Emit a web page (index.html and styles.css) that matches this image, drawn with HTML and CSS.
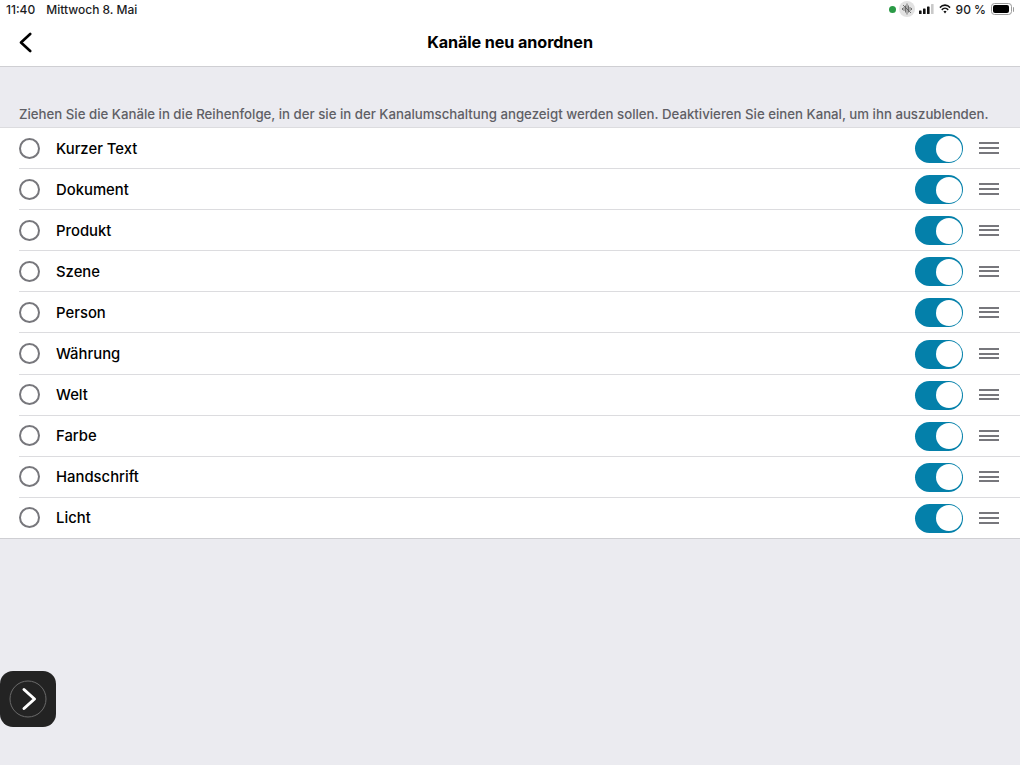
FILE: index.html
```html
<!DOCTYPE html>
<html lang="de">
<head>
<meta charset="utf-8">
<title>Kanäle neu anordnen</title>
<link rel="stylesheet" href="styles.css">
</head>
<body>
<header class="top">
  <div class="status">
    <div class="status-left"><span>11:40</span><span>Mittwoch 8. Mai</span></div>
    <div class="status-right">
      <span class="dot"></span>
      <span class="mic"><svg width="14" height="14" viewBox="0 0 14 14"><path d="M7 1.5v11M5.5 3.5v7M8.5 3.5v7M4 5v4M10 5v4M2.5 6v2M11.5 6v2M3 3l8 8" stroke="#555" stroke-width=".8" fill="none"/></svg></span>
      <svg class="signal" width="15" height="10" viewBox="0 0 15 10"><rect x="0" y="6.5" width="2.6" height="3.5" rx=".6" fill="#111"/><rect x="4" y="4.5" width="2.6" height="5.5" rx=".6" fill="#111"/><rect x="8" y="2.5" width="2.6" height="7.5" rx=".6" fill="#111"/><rect x="12" y="0" width="2.6" height="10" rx=".6" fill="#c9c9c9"/></svg>
      <svg class="wifi" width="12" height="10" viewBox="0 0 14 10" preserveAspectRatio="none"><path d="M1 3.6a8.6 8.6 0 0 1 12 0M3.2 5.8a5.5 5.5 0 0 1 7.6 0" stroke="#111" stroke-width="1.6" fill="none"/><path d="M5.2 7.5a2.6 2.6 0 0 1 3.6 0L7 9.6z" fill="#111"/></svg>
      <span class="pct">90 %</span>
      <span class="battery"><span class="battery-fill"></span></span>
    </div>
  </div>
  <nav class="nav">
    <svg class="back" width="14" height="22" viewBox="0 0 14 22"><path d="M12.2 2 3 10.5l9.2 8.5" stroke="#000" stroke-width="2.6" fill="none" stroke-linecap="round" stroke-linejoin="round"/></svg>
    <h1 class="title">Kanäle neu anordnen</h1>
  </nav>
</header>
<main>
  <p class="hint">Ziehen Sie die Kanäle in die Reihenfolge, in der sie in der Kanalumschaltung angezeigt werden sollen. Deaktivieren Sie einen Kanal, um ihn auszublenden.</p>
  <ul class="list">
    <li class="row"><span class="radio"></span><span class="name">Kurzer Text</span><span class="toggle"><span class="knob"></span></span><span class="grip"><i></i><i></i><i></i></span></li>
    <li class="row"><span class="radio"></span><span class="name">Dokument</span><span class="toggle"><span class="knob"></span></span><span class="grip"><i></i><i></i><i></i></span></li>
    <li class="row"><span class="radio"></span><span class="name">Produkt</span><span class="toggle"><span class="knob"></span></span><span class="grip"><i></i><i></i><i></i></span></li>
    <li class="row"><span class="radio"></span><span class="name">Szene</span><span class="toggle"><span class="knob"></span></span><span class="grip"><i></i><i></i><i></i></span></li>
    <li class="row"><span class="radio"></span><span class="name">Person</span><span class="toggle"><span class="knob"></span></span><span class="grip"><i></i><i></i><i></i></span></li>
    <li class="row"><span class="radio"></span><span class="name">Währung</span><span class="toggle"><span class="knob"></span></span><span class="grip"><i></i><i></i><i></i></span></li>
    <li class="row"><span class="radio"></span><span class="name">Welt</span><span class="toggle"><span class="knob"></span></span><span class="grip"><i></i><i></i><i></i></span></li>
    <li class="row"><span class="radio"></span><span class="name">Farbe</span><span class="toggle"><span class="knob"></span></span><span class="grip"><i></i><i></i><i></i></span></li>
    <li class="row"><span class="radio"></span><span class="name">Handschrift</span><span class="toggle"><span class="knob"></span></span><span class="grip"><i></i><i></i><i></i></span></li>
    <li class="row"><span class="radio"></span><span class="name">Licht</span><span class="toggle"><span class="knob"></span></span><span class="grip"><i></i><i></i><i></i></span></li>
  </ul>
</main>
<button class="assist" type="button" aria-label="Weiter">
  <svg width="40" height="40" viewBox="0 0 40 40"><circle cx="20" cy="20" r="18" stroke="#6a6a6a" stroke-width="1" fill="none"/><path d="M16 10.5 26.5 20 16 29.5" stroke="#fff" stroke-width="3" fill="none" stroke-linecap="round" stroke-linejoin="round"/></svg>
</button>
</body>
</html>
```

FILE: styles.css
```css
* { box-sizing: border-box; }
html, body { margin: 0; padding: 0; }
body {
  width: 1020px;
  height: 765px;
  overflow: hidden;
  position: relative;
  background: #ebebf0;
  font-family: Inter, "Liberation Sans", sans-serif;
  color: #000;
}
.top {
  height: 67px;
  background: #fff;
  border-bottom: 1px solid #cfcfd3;
}
.status {
  height: 18px;
  display: flex;
  align-items: center;
  justify-content: space-between;
  padding: 0 5px 0 6px;
  font-size: 12px;
  font-weight: 500;
  color: #1c1c1e;
}
.status-left { display: flex; gap: 11px; }
.status-right { display: flex; align-items: center; }
.dot { width: 7px; height: 7px; border-radius: 50%; background: #2a9a46; margin-right: 3px; }
.mic { width: 16px; height: 16px; border-radius: 50%; background: #e2e2e2; display: flex; align-items: center; justify-content: center; margin-right: 4px; }
.signal { margin-right: 5px; }
.wifi { margin-right: 5px; }
.pct { font-size: 12px; margin-right: 5px; }
.battery { position: relative; width: 21px; height: 12px; border: 1px solid #9a9a9a; border-radius: 3.5px; padding: 1px; display: flex; margin-right: 3px; }
.battery::after { content: ""; position: absolute; right: -3px; top: 2.5px; width: 1.5px; height: 5px; background: #9a9a9a; border-radius: 0 1px 1px 0; }
.battery-fill { width: 16px; background: #000; border-radius: 2px; }
.nav {
  height: 48px;
  position: relative;
  display: flex;
  align-items: center;
  justify-content: center;
}
.back { position: absolute; left: 18px; top: 14px; }
.title { margin: 0; font-size: 16.2px; font-weight: 700; letter-spacing: -0.1px; }
.hint {
  margin: 0;
  height: 60px;
  padding: 39px 0 0 19px;
  font-size: 13.24px;
  line-height: 17px;
  font-weight: 500;
  color: #5f5f65;
  white-space: nowrap;
}
.list {
  list-style: none;
  margin: 0;
  padding: 0 0 0 19px;
  background: #fff;
  border-top: 1px solid #dcdcdf;
  border-bottom: 1px solid #cfcfd3;
}
.row {
  height: 41.1px;
  display: flex;
  align-items: center;
  padding-right: 21px;
  border-bottom: 1px solid #dcdcdf;
}
.row:last-child { border-bottom: 0; height: 40.1px; }
.radio {
  width: 21px;
  height: 21px;
  border: 2px solid #77777c;
  border-radius: 50%;
  margin-right: 16px;
}
.name { flex: 1; font-size: 14.85px; font-weight: 550; margin-top: 1px; }
.toggle {
  width: 48px;
  height: 29px;
  border-radius: 15px;
  background: #0480aa;
  display: flex;
  justify-content: flex-end;
  align-items: center;
  padding-right: 1.5px;
  margin-right: 16px;
  margin-top: 1px;
}
.knob { width: 26px; height: 26px; border-radius: 50%; background: #fff; }
.grip { width: 20px; display: flex; flex-direction: column; gap: 2.7px; }
.grip i { display: block; height: 2px; background: #77777c; }
.assist {
  position: absolute;
  left: 0;
  top: 671px;
  width: 56px;
  height: 56px;
  padding: 0;
  border: 0;
  border-radius: 13px;
  background: #232323;
  display: flex;
  align-items: center;
  justify-content: center;
}
```
